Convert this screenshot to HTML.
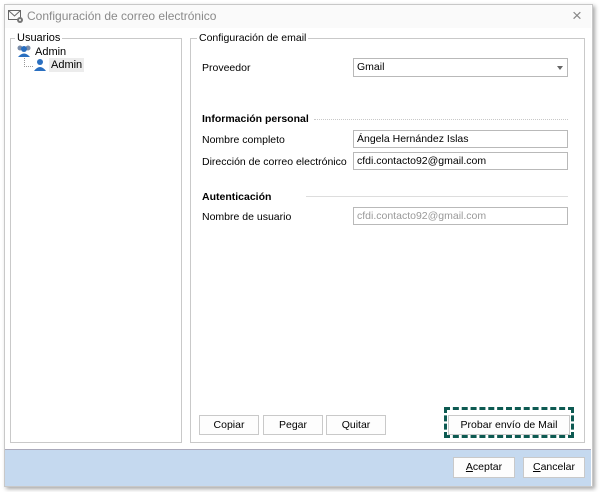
<!DOCTYPE html><html><head><style>
body{margin:0;width:600px;height:492px;background:#fff;font-family:"Liberation Sans",sans-serif;font-size:10.5px;color:#000;position:relative;overflow:hidden}
.a{position:absolute}
.win{left:4px;top:4px;width:587px;height:481px;border:1px solid #c8c8c8;box-shadow:2px 2px 4px rgba(0,0,0,.35);background:#fff}
.grp{border:1px solid #c9c9c9}
.lg{background:#fff;padding:0 2px}
.in{border:1px solid #b9b9b9;height:18px;line-height:17px;padding-left:3px;background:#fff;box-sizing:border-box}
.btn{border:1px solid #c9c9c9;background:#fdfdfd;text-align:center;box-sizing:border-box;height:20px;line-height:18px}
</style></head><body>
<div class="a win"></div>
<div class="a" style="left:5px;top:5px;width:586px;height:23px;background:#fafafa"></div>
<svg class="a" style="left:8px;top:8px" width="16" height="16" viewBox="0 0 16 16"><rect x="0.5" y="2.5" width="12" height="9" fill="none" stroke="#666"/><path d="M0.5 2.5 L6.5 8 L12.5 2.5" fill="none" stroke="#666"/><circle cx="12" cy="12" r="3" fill="#777"/><circle cx="12" cy="12" r="1" fill="#fff"/></svg>
<div class="a" style="left:27px;top:9px;font-size:12px;color:#8a8a8a">Configuración de correo electrónico</div>
<div class="a" style="left:572px;top:6px;font-size:17px;color:#888">×</div>
<div class="a grp" style="left:10px;top:38px;width:170px;height:403px"></div>
<div class="a lg" style="left:15px;top:32px;font-size:11px">Usuarios</div>
<svg class="a" style="left:16px;top:44px" width="16" height="14" viewBox="0 0 16 14"><circle cx="4" cy="4" r="2.5" fill="#7a8ca8"/><circle cx="12" cy="4" r="2.5" fill="#7a8ca8"/><circle cx="8" cy="5" r="3" fill="#2a6fc0"/><path d="M2 13 Q8 6 14 13Z" fill="#2a6fc0"/></svg>
<div class="a" style="left:35px;top:46px;font-size:11px">Admin</div>
<div class="a" style="left:24px;top:58px;width:8px;height:8px;border-left:1px dotted #999;border-bottom:1px dotted #999"></div>
<svg class="a" style="left:33px;top:58px" width="14" height="14" viewBox="0 0 14 14"><circle cx="7" cy="4" r="3" fill="#2a6fc0"/><path d="M1 13 Q7 5 13 13Z" fill="#2a6fc0"/></svg>
<div class="a" style="left:49px;top:58px;padding:1px 2px;background:#ececec;font-size:11px">Admin</div>
<div class="a grp" style="left:190px;top:38px;width:393px;height:403px"></div>
<div class="a lg" style="left:197px;top:32px">Configuración de email</div>
<div class="a" style="left:202px;top:62px">Proveedor</div>
<div class="a in" style="left:353px;top:58px;width:215px;height:19px;line-height:17px">Gmail</div>
<div class="a" style="left:557px;top:66px;border-left:3px solid transparent;border-right:3px solid transparent;border-top:4px solid #666"></div>
<div class="a" style="left:202px;top:113px;font-weight:bold">Información personal</div>
<div class="a" style="left:314px;top:119px;width:254px;border-top:1px dotted #c8c8c8"></div>
<div class="a" style="left:202px;top:134px">Nombre completo</div>
<div class="a in" style="left:353px;top:130px;width:215px">Ángela Hernández Islas</div>
<div class="a" style="left:202px;top:156px">Dirección de correo electrónico</div>
<div class="a in" style="left:353px;top:152px;width:215px">cfdi.contacto92@gmail.com</div>
<div class="a" style="left:202px;top:191px;font-weight:bold">Autenticación</div>
<div class="a" style="left:306px;top:196px;width:262px;border-top:1px solid #ddd"></div>
<div class="a" style="left:202px;top:211px">Nombre de usuario</div>
<div class="a in" style="left:353px;top:207px;width:215px;color:#999">cfdi.contacto92@gmail.com</div>
<div class="a btn" style="left:199px;top:415px;width:60px">Copiar</div>
<div class="a btn" style="left:263px;top:415px;width:60px">Pegar</div>
<div class="a btn" style="left:326px;top:415px;width:60px">Quitar</div>
<div class="a" style="left:444px;top:407px;width:130px;height:31px;border:3px dashed #0d5a52;box-sizing:border-box"></div>
<div class="a btn" style="left:448px;top:415px;width:122px">Probar envío de Mail</div>
<div class="a" style="left:5px;top:449px;width:586px;height:36px;background:#c5d9ef;border-top:1px solid #aab"></div>
<div class="a btn" style="left:453px;top:457px;width:62px;height:21px"><u>A</u>ceptar</div>
<div class="a btn" style="left:523px;top:457px;width:62px;height:21px"><u>C</u>ancelar</div>
</body></html>
